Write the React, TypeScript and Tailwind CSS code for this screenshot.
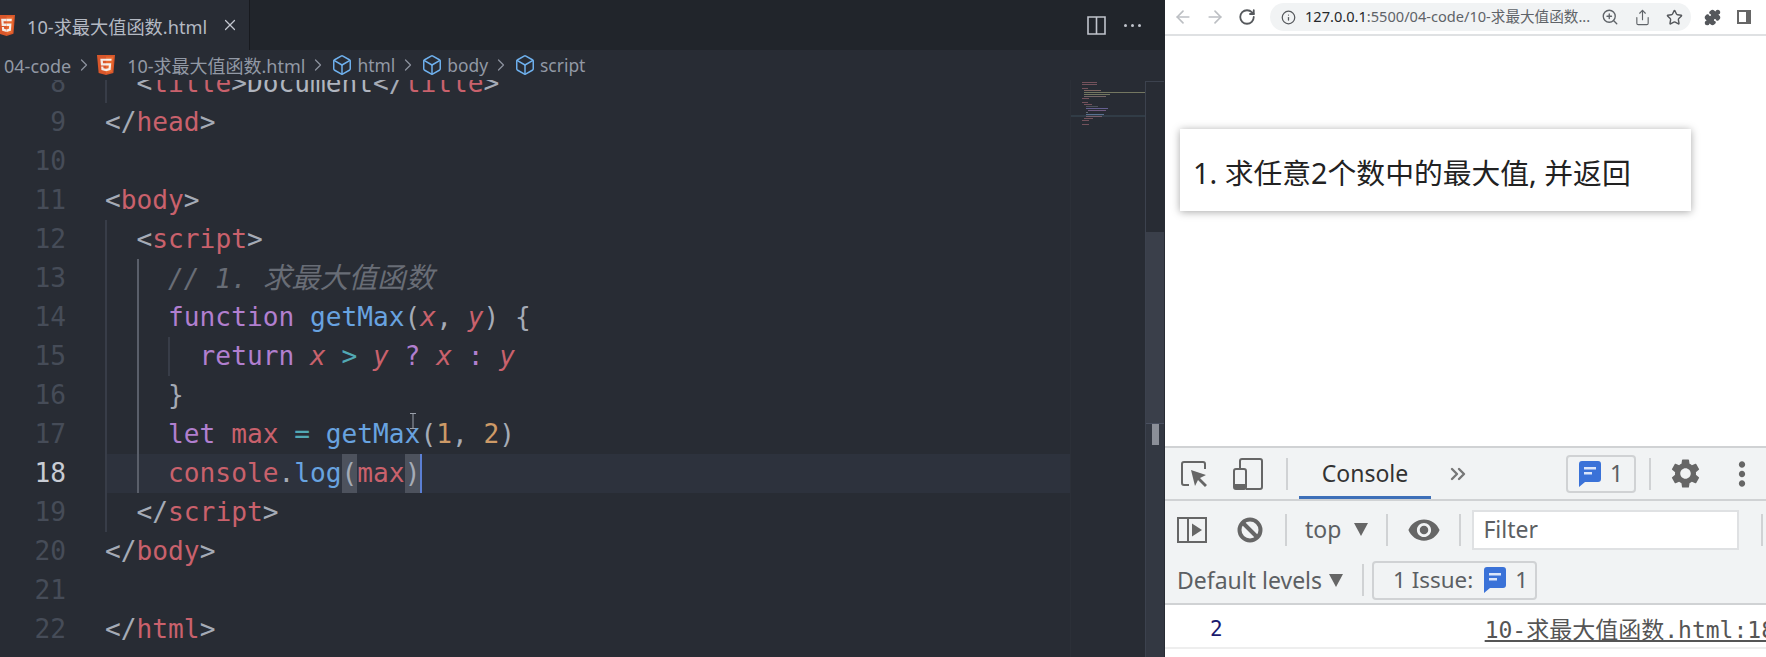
import { ArrowLeft, ArrowRight, Box, ChevronRight, ChevronsRight, Info, Puzzle, RotateCw, Share, Star, X, ZoomIn } from "lucide-react";
import React from "react";
import { MdMoreVert, MdSettings, MdVisibility } from "react-icons/md";

const UI_FONT = "font-['Noto_Sans','Noto_Sans_CJK_SC',sans-serif]";
const CODE_FONT = "font-['DejaVu_Sans_Mono','Noto_Sans_CJK_SC',monospace]";

function Html5Logo({ className }: { className?: string }) {
  return (
    <svg viewBox="30 0 451 512" preserveAspectRatio="none" className={className}>
      <path fill="#d9572b" d="M71 460 30 0h451l-41 460-185 52z" />
      <path fill="#e8692f" d="M256 472l149-41 35-394H256z" />
      <path fill="#f3ece6" d="M256 208h-75l-5-58h80V94H114l1 15 14 158h127zM256 355l-63-17-4-45h-56l8 89 115 32z" />
      <path fill="#f7f3ee" d="M256 208v59h70l-7 71-63 17v59l115-32 1-10 13-149 2-15h-15zM256 94v56h136l1-12 3-29 1-15z" />
    </svg>
  );
}

function ChatIcon({ className }: { className?: string }) {
  return (
    <svg viewBox="0 0 22 26" className={className}>
      <path fill="#3a72d8" d="M3 0h16a3 3 0 0 1 3 3v15a3 3 0 0 1-3 3H6l-6 5V3a3 3 0 0 1 3-3z" />
      <rect x="5" y="6" width="12" height="2.5" fill="#dbe6fa" />
      <rect x="5" y="11" width="8" height="2.5" fill="#dbe6fa" />
    </svg>
  );
}

function Triangle({ className }: { className?: string }) {
  return (
    <svg viewBox="0 0 14 13" className={className}>
      <path fill="#666" d="M0 0h14L7 13z" />
    </svg>
  );
}

function Separator({ className = "" }: { className?: string }) {
  return <div className={`h-[32px] w-[2px] bg-[#d0d2d4] ${className}`} />;
}

const Crumb = () => <ChevronRight className="mx-[3px] h-[20px] w-[20px] shrink-0 text-[#8b919c]" strokeWidth={1.5} />;

function Symbol({ label }: { label: string }) {
  return (
    <span className="flex items-center gap-[4px] text-[17.4px]">
      <Box className="h-[22px] w-[22px] text-[#6fb1ee]" strokeWidth={1.6} />
      {label}
    </span>
  );
}

function Minimap() {
  const rows: [number, number, number, string][] = [
    [0, 0, 15, "#8d5f6a"],
    [1, 0, 15, "#8d5f6a"],
    [3, 0, 6, "#8d5f6a"],
    [4, 2, 17, "#9a7a70"],
    [5, 2, 62, "#8d9070"],
    [6, 2, 26, "#8d9070"],
    [7, 2, 22, "#8d7a78"],
    [8, 0, 7, "#8d5f6a"],
    [10, 0, 6, "#8d5f6a"],
    [11, 2, 8, "#8d5f6a"],
    [12, 4, 12, "#5a5f68"],
    [13, 4, 22, "#7a70b0"],
    [14, 6, 18, "#8a6a9a"],
    [15, 4, 2, "#777c85"],
    [16, 4, 18, "#6a8ab0"],
    [17, 4, 16, "#8f6a78"],
    [18, 2, 9, "#8d5f6a"],
    [19, 0, 7, "#8d5f6a"],
    [21, 0, 7, "#8d5f6a"],
  ];
  return (
    <div className="w-[75px] shrink-0 border-l border-[#2c3038]">
      <svg width="75" height="60" className="block">
        <rect x="0" y="35" width="75" height="2" fill="#313c46" />
        {rows.map(([i, x, w, c]) => (
          <rect key={i} x={11 + x} y={2 + i * 2} width={w} height="1" fill={c} opacity="0.75" />
        ))}
      </svg>
    </div>
  );
}

const T = ({ c, children, i }: { c: string; children: React.ReactNode; i?: boolean }) => (
  <span className={i ? `italic ${c}` : c}>{children}</span>
);

const PUNCT = "text-[#a5abb6]";
const TAG = "text-[#c9616c]";
const KEYWORD = "text-[#b17fcf]";
const FUNC = "text-[#68a3e0]";
const PLAIN = "text-[#b0b5bf]";

function Line({
  num,
  guides = [],
  active,
  children,
}: {
  num: number;
  guides?: string[];
  active?: boolean;
  children?: React.ReactNode;
}) {
  return (
    <div className="relative flex h-[39px] leading-[39px] whitespace-pre">
      <div className={`mr-[39px] w-[66px] shrink-0 text-right ${active ? "text-[#c8ccd4]" : "text-[#464c58]"}`}>{num}</div>
      <div className={`flex min-w-0 flex-1 ${active ? "bg-[#2d323d]" : ""}`}>
        {guides.map((g, i) => (
          <span key={i} className={`h-[39px] w-[2ch] shrink-0 border-l-2 ${g}`} />
        ))}
        <div>{children}</div>
      </div>
    </div>
  );
}

const G1 = "border-[#383d48]";
const G2 = "border-[#5a5f6a]";

function CodeEditor() {
  return (
    <div className={`-mt-[16px] w-[1070px] shrink-0 text-[26.2px] ${CODE_FONT}`}>
      <Line num={8} guides={[G1]}>
        <T c={PUNCT}>&lt;</T>
        <T c={TAG}>title</T>
        <T c={PUNCT}>&gt;</T>
        <T c={PLAIN}>Document</T>
        <T c={PUNCT}>&lt;/</T>
        <T c={TAG}>title</T>
        <T c={PUNCT}>&gt;</T>
      </Line>
      <Line num={9}>
        <T c={PUNCT}>&lt;/</T>
        <T c={TAG}>head</T>
        <T c={PUNCT}>&gt;</T>
      </Line>
      <Line num={10} />
      <Line num={11}>
        <T c={PUNCT}>&lt;</T>
        <T c={TAG}>body</T>
        <T c={PUNCT}>&gt;</T>
      </Line>
      <Line num={12} guides={[G1]}>
        <T c={PUNCT}>&lt;</T>
        <T c={TAG}>script</T>
        <T c={PUNCT}>&gt;</T>
      </Line>
      <Line num={13} guides={[G1, G2]}>
        <T c="text-[#686d76]" i>
          // 1. <span className="text-[28.6px]">求最大值函数</span>
        </T>
      </Line>
      <Line num={14} guides={[G1, G2]}>
        <T c={KEYWORD}>function </T>
        <T c={FUNC}>getMax</T>
        <T c={PUNCT}>(</T>
        <T c={TAG} i>
          x
        </T>
        <T c={PUNCT}>, </T>
        <T c={TAG} i>
          y
        </T>
        <T c={PUNCT}>) {"{"}</T>
      </Line>
      <Line num={15} guides={[G1, G2, G1]}>
        <T c={KEYWORD}>return </T>
        <T c={TAG} i>
          x
        </T>
        <T c="text-[#52a9b4]"> &gt; </T>
        <T c={TAG} i>
          y
        </T>
        <T c={KEYWORD}> ? </T>
        <T c={TAG} i>
          x
        </T>
        <T c={KEYWORD}> : </T>
        <T c={TAG} i>
          y
        </T>
      </Line>
      <Line num={16} guides={[G1, G2]}>
        <T c={PUNCT}>{"}"}</T>
      </Line>
      <Line num={17} guides={[G1, G2]}>
        <T c={KEYWORD}>let </T>
        <T c={TAG}>max</T>
        <T c="text-[#52a9b4]"> = </T>
        <T c={FUNC}>getMax</T>
        <T c={PUNCT}>(</T>
        <T c="text-[#cd9a67]">1</T>
        <T c={PUNCT}>, </T>
        <T c="text-[#cd9a67]">2</T>
        <T c={PUNCT}>)</T>
        <svg viewBox="0 0 8 16" className="absolute top-[-2px] left-[409px] h-[16px] w-[8px]">
          <path d="M1 .5h6M1 15.5h6M4 .5v15" stroke="#9aa0aa" fill="none" />
        </svg>
      </Line>
      <Line num={18} guides={[G1, G2]} active>
        <T c={TAG}>console</T>
        <T c={PUNCT}>.</T>
        <T c={FUNC}>log</T>
        <span className={`inline-block h-[39px] bg-[#4d525d] align-top ${PUNCT}`}>(</span>
        <T c={TAG}>max</T>
        <span className={`inline-block h-[39px] bg-[#4d525d] align-top ${PUNCT}`}>)</span>
        <span className="inline-block h-[39px] w-[2px] bg-[#5b7fd4] align-top" />
      </Line>
      <Line num={19} guides={[G1]}>
        <T c={PUNCT}>&lt;/</T>
        <T c={TAG}>script</T>
        <T c={PUNCT}>&gt;</T>
      </Line>
      <Line num={20}>
        <T c={PUNCT}>&lt;/</T>
        <T c={TAG}>body</T>
        <T c={PUNCT}>&gt;</T>
      </Line>
      <Line num={21} />
      <Line num={22}>
        <T c={PUNCT}>&lt;/</T>
        <T c={TAG}>html</T>
        <T c={PUNCT}>&gt;</T>
      </Line>
    </div>
  );
}

function EditorPane() {
  return (
    <div className={`flex w-[1165px] shrink-0 flex-col bg-[#282c34] ${UI_FONT}`}>
      <div className="flex h-[50px] shrink-0 items-stretch bg-[#21252b]">
        <div className="flex w-[250px] items-center overflow-hidden border-r border-[#181a1f] bg-[#282c34] text-[18.2px] leading-[24px] text-[#b4b9c3]">
          <Html5Logo className="ml-[-2px] h-[21px] w-[17px] shrink-0" />
          <span className="mt-[3px] ml-[12px] whitespace-nowrap">10-求最大值函数.html</span>
          <X className="ml-[14px] h-[18px] w-[18px] shrink-0 text-[#c3c7cf]" strokeWidth={1.6} />
        </div>
        <div className="ml-auto flex items-center">
          <svg viewBox="0 0 19 19" className="h-[19px] w-[19px]">
            <path d="M1 1h17v17H1zM9.5 1v17" fill="none" stroke="#c0c4cc" strokeWidth="1.6" />
          </svg>
          <span className="mr-[24px] ml-[18px] flex gap-[4px]">
            <i className="h-[3px] w-[3px] rounded-full bg-[#c0c4cc]" />
            <i className="h-[3px] w-[3px] rounded-full bg-[#c0c4cc]" />
            <i className="h-[3px] w-[3px] rounded-full bg-[#c0c4cc]" />
          </span>
        </div>
      </div>
      <div className="flex h-[30px] shrink-0 items-center pl-[4px] text-[18px] leading-[24px] whitespace-nowrap text-[#9299a5]">
        <span className="mt-[1px]">04-code</span>
        <Crumb />
        <Html5Logo className="h-[20px] w-[18px] shrink-0" />
        <span className="mt-[1px] ml-[12px]">10-求最大值函数.html</span>
        <Crumb />
        <Symbol label="html" />
        <Crumb />
        <Symbol label="body" />
        <Crumb />
        <Symbol label="script" />
      </div>
      <div className="flex min-h-0 flex-1 overflow-hidden">
        <CodeEditor />
        <Minimap />
        <div className="mt-px flex w-[19px] shrink-0 flex-col border-t border-l border-[#3c424e]">
          <div className="h-[150px] shrink-0" />
          <div className="h-[191px] shrink-0 bg-[#3a3f4a]" />
          <div className="flex-1 border-t border-[#4a5060] bg-[#333842]">
            <div className="ml-[6px] h-[21px] w-[7px] bg-[#8b8f98]" />
          </div>
        </div>
      </div>
    </div>
  );
}

function BrowserBar() {
  return (
    <div className="flex h-[36px] shrink-0 items-center border-b-2 border-[#dfe1e3] text-[#5f6368]">
      <ArrowLeft className="ml-[8px] h-[20px] w-[20px] text-[#bcbfc3]" strokeWidth={2} />
      <ArrowRight className="ml-[12px] h-[20px] w-[20px] text-[#bcbfc3]" strokeWidth={2} />
      <RotateCw className="ml-[13px] h-[18px] w-[18px] text-[#55585c]" strokeWidth={2.4} />
      <div className="ml-[14px] flex h-[28px] w-[421px] items-center rounded-full bg-[#f1f3f4] pl-[11px]">
        <Info className="h-[15px] w-[15px] text-[#55585c]" strokeWidth={2} />
        <span className="ml-[9px] w-[285px] overflow-hidden text-[14.6px] whitespace-nowrap text-[#5f6368]">
          <span className="text-[#26282b]">127.0.0.1</span>:5500/04-code/10-求最大值函数....
        </span>
        <ZoomIn className="ml-[11px] h-[18px] w-[18px]" strokeWidth={1.8} />
        <Share className="ml-[15px] h-[17px] w-[17px]" strokeWidth={1.6} />
        <Star className="ml-[15px] h-[17px] w-[17px] text-[#55585c]" strokeWidth={2} />
      </div>
      <Puzzle className="ml-[13px] h-[17px] w-[17px] fill-[#55585c] text-[#55585c]" />
      <svg viewBox="0 0 14 14" className="ml-[16px] h-[14px] w-[14px]">
        <path fill="#666" d="M0 0h14v14H0zM2 2v10h7V2z" fillRule="evenodd" />
      </svg>
    </div>
  );
}

function DevTools() {
  return (
    <div className="flex flex-col overflow-hidden text-[#5c5f63]">
      {/* main tabs */}
      <div className="flex h-[55px] shrink-0 items-center border-y-2 border-[#d0d2d4] bg-[#f1f3f4]">
        <svg viewBox="0 0 26 26" className="ml-[16px] h-[26px] w-[26px]">
          <path d="M8 24H3a2 2 0 0 1-2-2V3a2 2 0 0 1 2-2h19a2 2 0 0 1 2 2v5" fill="none" stroke="#666" strokeWidth="2" />
          <path d="M10 9l15 5-6 3 7 7-2 2-7-7-3 6z" fill="#666" />
        </svg>
        <svg viewBox="0 0 30 32" className="ml-[26px] h-[32px] w-[30px]">
          <path d="M7 10V3a2 2 0 0 1 2-2h18a2 2 0 0 1 2 2v26a2 2 0 0 1-2 2H13" fill="none" stroke="#666" strokeWidth="2" />
          <rect x="1" y="11" width="12" height="20" rx="2" fill="none" stroke="#666" strokeWidth="2" />
          <rect x="1" y="26" width="12" height="5" fill="#666" />
        </svg>
        <Separator className="ml-[23px]" />
        <div className="ml-[11px] flex w-[132px] items-center justify-center self-stretch border-b-[3px] border-[#3d6fb8] pt-[3px] text-[23px] text-[#333]">
          Console
        </div>
        <ChevronsRight className="ml-[15px] h-[24px] w-[24px] text-[#777]" strokeWidth={2.4} />
        <div className="mr-[13px] ml-auto flex h-[38px] w-[70px] items-center justify-center gap-[9px] rounded-[4px] border-2 border-[#d0d2d4] text-[23px]">
          <ChatIcon className="h-[26px] w-[22px]" />1
        </div>
        <Separator className="mr-[17px]" />
        <MdSettings className="mr-[20px] h-[35px] w-[35px] text-[#666]" />
        <MdMoreVert className="mr-[5px] h-[38px] w-[38px] text-[#666]" />
      </div>
      {/* filter */}
      <div className="flex h-[57px] shrink-0 items-center bg-[#f1f3f4]">
        <svg viewBox="0 0 30 26" className="ml-[12px] h-[26px] w-[30px]">
          <path d="M1 1h28v24H1zM11 1v24" fill="none" stroke="#666" strokeWidth="2" />
          <path d="M15 6.500l10 6.500-10 6.500z" fill="#666" />
        </svg>
        <svg viewBox="0 0 26 26" className="ml-[30px] h-[26px] w-[26px]">
          <circle cx="13" cy="13" r="10.500" fill="none" stroke="#666" strokeWidth="4" />
          <path d="M5.500 5.500l15 15" stroke="#666" strokeWidth="4" />
        </svg>
        <Separator className="ml-[22px]" />
        <span className="ml-[18px] text-[23px]">top</span>
        <Triangle className="ml-[13px] h-[13px] w-[14px]" />
        <Separator className="ml-[18px]" />
        <MdVisibility className="ml-[19px] h-[34px] w-[34px] text-[#666]" />
        <Separator className="ml-[18px]" />
        <div className="ml-[11px] flex h-[40px] w-[267px] items-center border-2 border-[#dfe1e3] bg-white pl-[9px] text-[23px]">
          Filter
        </div>
        <Separator className="ml-[22px] shrink-0" />
      </div>
      {/* levels */}
      <div className="flex h-[47px] shrink-0 items-center border-b-2 border-[#d0d2d4] bg-[#f1f3f4] pb-[1px]">
        <span className="ml-[12px] text-[23px] whitespace-nowrap">Default levels</span>
        <Triangle className="ml-[7px] h-[13px] w-[14px]" />
        <Separator className="ml-[19px]" />
        <div className="ml-[8px] flex h-[39px] w-[165px] items-center rounded-[4px] border-2 border-[#d0d2d4] pl-[19px] text-[22.4px] whitespace-nowrap">
          1 Issue:
          <ChatIcon className="ml-[11px] h-[26px] w-[22px]" />
          <span className="ml-[9px]">1</span>
        </div>
      </div>
      {/* console output */}
      <div className="flex h-[44px] shrink-0 items-center overflow-hidden border-b-2 border-[#eeeeee] bg-white pt-[8px]">
        <span className={`ml-[45px] text-[21px] text-[#1a1a6e] ${CODE_FONT}`}>2</span>
        <span className={`ml-[262px] text-[23px] whitespace-nowrap text-[#555] underline ${CODE_FONT}`}>
          10-求最大值函数.html:18
        </span>
      </div>
    </div>
  );
}

function BrowserPane() {
  return (
    <div className={`flex min-w-0 flex-1 flex-col bg-white ${UI_FONT}`}>
      <BrowserBar />
      <div className="h-[410px] shrink-0 px-[15px] pt-[93px]">
        <div className="flex h-[82px] w-[511px] items-center bg-white pt-[6px] pl-[13px] text-[28.8px] text-[#222] shadow-[0_1px_8px_rgba(0,0,0,0.35)]">
          1. 求任意2个数中的最大值, 并返回
        </div>
      </div>
      <DevTools />
    </div>
  );
}

export default function App(): React.JSX.Element {
  return (
    <div className="flex h-[657px] w-[1766px] overflow-hidden">
      <EditorPane />
      <BrowserPane />
    </div>
  );
}
